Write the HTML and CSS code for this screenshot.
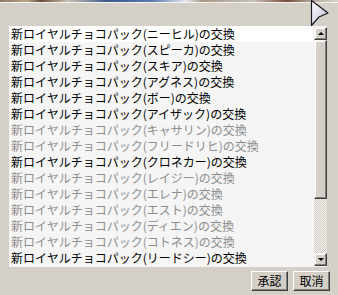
FILE: index.html
```html
<!DOCTYPE html>
<html lang="ja">
<head>
    <meta charset="UTF-8">
    <title>交換</title>
    <link rel="stylesheet" href="styles.css">
</head>
<body>
    <div class="top-strip"></div>

    <div class="panel">
        <div class="list-box">
            <ul class="items">
                <li class="item hover">新ロイヤルチョコパック(ニーヒル)の交換</li>
                <li class="item">新ロイヤルチョコパック(スピーカ)の交換</li>
                <li class="item">新ロイヤルチョコパック(スキア)の交換</li>
                <li class="item">新ロイヤルチョコパック(アグネス)の交換</li>
                <li class="item">新ロイヤルチョコパック(ボー)の交換</li>
                <li class="item">新ロイヤルチョコパック(アイザック)の交換</li>
                <li class="item off">新ロイヤルチョコパック(キャサリン)の交換</li>
                <li class="item off">新ロイヤルチョコパック(フリードリヒ)の交換</li>
                <li class="item">新ロイヤルチョコパック(クロネカー)の交換</li>
                <li class="item off">新ロイヤルチョコパック(レイジー)の交換</li>
                <li class="item off">新ロイヤルチョコパック(エレナ)の交換</li>
                <li class="item off">新ロイヤルチョコパック(エスト)の交換</li>
                <li class="item off">新ロイヤルチョコパック(ディエン)の交換</li>
                <li class="item off">新ロイヤルチョコパック(コトネス)の交換</li>
                <li class="item">新ロイヤルチョコパック(リードシー)の交換</li>
            </ul>
            <div class="scrollbar">
                <div class="sb-btn"><span class="tri up"></span></div>
                <div class="sb-thumb"></div>
                <div class="sb-track"></div>
                <div class="sb-btn"><span class="tri down"></span></div>
            </div>
        </div>

        <div class="actions">
            <button class="btn">承認</button>
            <button class="btn">取消</button>
        </div>
    </div>

    <svg class="cursor" width="22" height="28" viewBox="0 0 22 28">
        <defs>
            <linearGradient id="cg" x1="0" y1="0" x2="1" y2="1">
                <stop offset="0" stop-color="#ffffff"/>
                <stop offset="0.6" stop-color="#d8d6e6"/>
                <stop offset="1" stop-color="#8a86a8"/>
            </linearGradient>
        </defs>
        <polygon points="1.5,0.5 18,13 9,17 1.5,25.5" fill="url(#cg)" stroke="#1a1a24" stroke-width="1.2" stroke-linejoin="round"/>
    </svg>
</body>
</html>
```

FILE: styles.css
```css
* { box-sizing: border-box; }
body {
    margin: 0;
    width: 338px;
    height: 295px;
    background: #d4d0c8;
    font-family: "Noto Sans CJK JP", "Liberation Sans", sans-serif;
    font-size: 12px;
    position: relative;
    overflow: hidden;
}

.top-strip {
    height: 3px;
    background: linear-gradient(90deg, #8a7a60 0%, #b8a888 8%, #6a4a3a 12%, #c8c0b0 20%, #3a5a8a 32%, #5a7ab0 45%, #e8e8f0 55%, #a89a88 60%, #c8c0b8 75%, #7a4a3a 85%, #b0a898 92%, #d8d0c0 100%);
    border-bottom: 1px solid #f4f2ee;
}

.panel {
    padding: 23px 8px 0 9px;
}

.list-box {
    display: flex;
    width: 318px;
    height: 241px;
    background: #f5f5f5;
}

.items {
    list-style: none;
    margin: 0;
    padding: 0;
    flex: 1;
}
.item {
    height: 16px;
    line-height: 16px;
    padding-left: 2px;
    color: #000;
    white-space: nowrap;
    overflow: hidden;
}
.item.hover {
    background: #fff;
}
.item.off {
    color: #8e8e8e;
}

.scrollbar {
    width: 14px;
    display: flex;
    flex-direction: column;
    padding: 1px 0 1px 1px;
}
.sb-btn, .sb-thumb {
    background: #d4d0c8;
    border-top: 1px solid #f4f2ee;
    border-left: 1px solid #f4f2ee;
    border-right: 1px solid #404040;
    border-bottom: 1px solid #404040;
    box-shadow: inset -1px -1px 0 #808080, inset 1px 1px 0 #ffffff;
}
.sb-btn {
    height: 13px;
    display: flex;
    align-items: center;
    justify-content: center;
}
.sb-thumb {
    height: 159px;
}
.sb-track {
    flex: 1;
    background-color: #f0efec;
    background-image: linear-gradient(45deg, #d4d0c8 25%, transparent 25%, transparent 75%, #d4d0c8 75%),
        linear-gradient(45deg, #d4d0c8 25%, transparent 25%, transparent 75%, #d4d0c8 75%);
    background-size: 2px 2px;
    background-position: 0 0, 1px 1px;
}
.tri {
    width: 0;
    height: 0;
    border-left: 3px solid transparent;
    border-right: 3px solid transparent;
}
.tri.up { border-bottom: 3px solid #000; }
.tri.down { border-top: 3px solid #000; }

.actions {
    display: flex;
    justify-content: flex-end;
    gap: 5px;
    margin-top: 4px;
}
.btn {
    width: 37px;
    height: 20px;
    padding: 0;
    font-family: inherit;
    font-size: 12px;
    line-height: 16px;
    color: #000;
    background: #d4d0c8;
    border-top: 1px solid #ffffff;
    border-left: 1px solid #ffffff;
    border-right: 1px solid #404040;
    border-bottom: 1px solid #404040;
    box-shadow: inset -1px -1px 0 #808080;
}

.cursor {
    position: absolute;
    left: 310px;
    top: 0;
}
```
